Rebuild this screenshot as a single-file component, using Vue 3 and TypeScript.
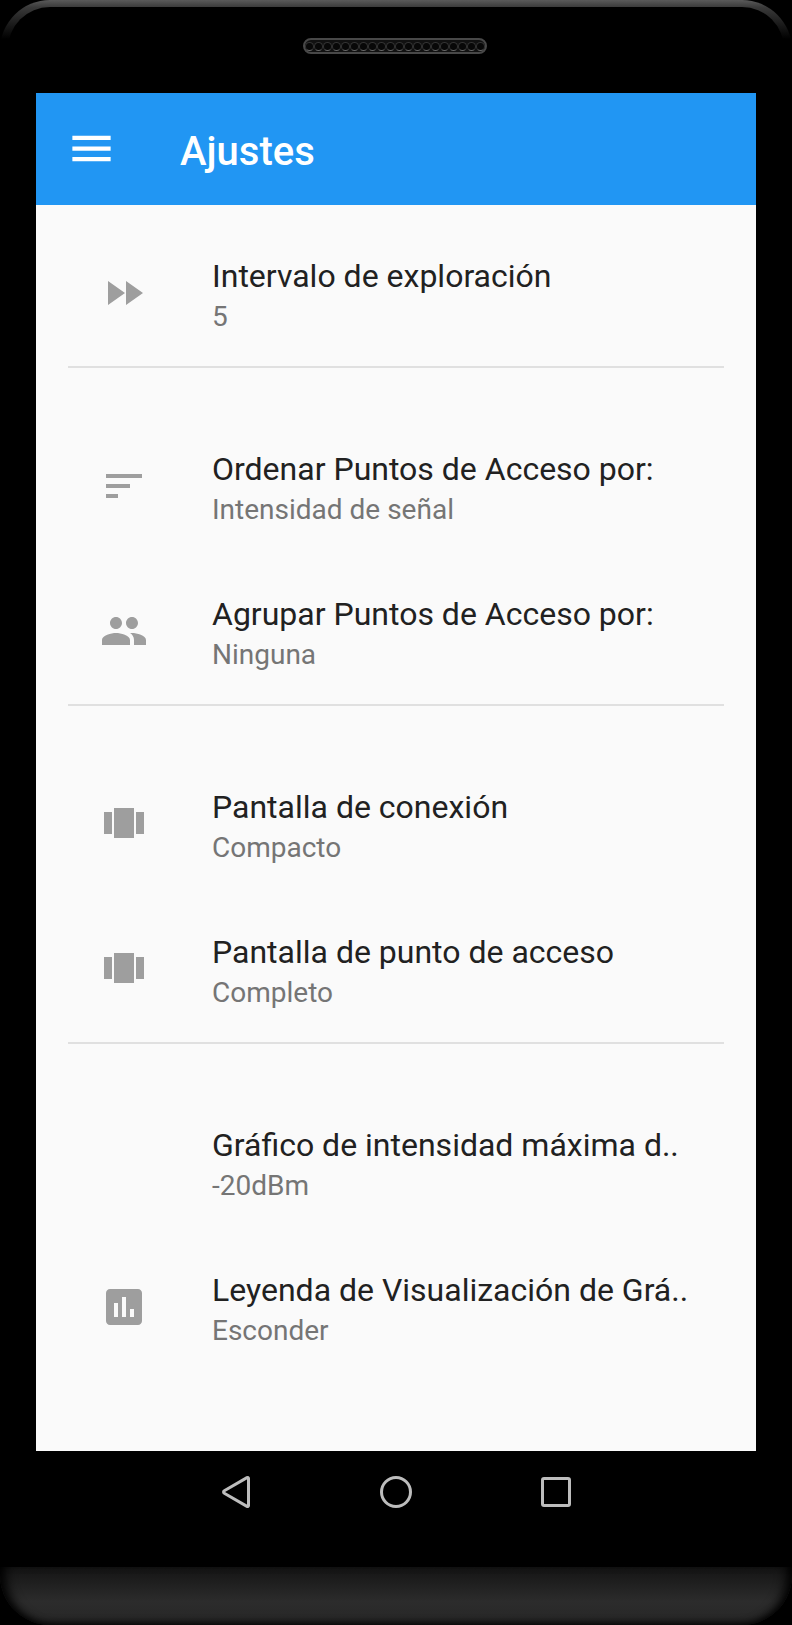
<script setup lang="ts">
interface Row {
  title: string;
  value: string;
  icon?: string;
}

const forward = 'M4 18l8.5-6L4 6v12zm9-12v12l8.5-6L13 6z';
const sort = 'M3 18h6v-2H3v2zM3 6v2h18V6H3zm0 7h12v-2H3v2z';
const group =
  'M16 11c1.66 0 2.99-1.34 2.99-3S17.66 5 16 5c-1.66 0-3 1.34-3 3s1.34 3 3 3zm-8 0c1.66 0 2.99-1.34 2.99-3S9.66 5 8 5C6.34 5 5 6.34 5 8s1.34 3 3 3zm0 2c-2.33 0-7 1.17-7 3.5V19h14v-2.5c0-2.33-4.67-3.5-7-3.5zm8 0c-.29 0-.62.02-.97.05 1.16.84 1.97 1.97 1.97 3.45V19h6v-2.5c0-2.33-4.67-3.5-7-3.5z';
const carousel = 'M7 19h10V4H7v15zm-5-2h4V6H2v11zM18 6v11h4V6h-4z';
const chart =
  'M19 3H5c-1.1 0-2 .9-2 2v14c0 1.1.9 2 2 2h14c1.1 0 2-.9 2-2V5c0-1.1-.9-2-2-2zM9 17H7v-7h2v7zm4 0h-2V7h2v10zm4 0h-2v-4h2v4z';

const sections: Row[][] = [
  [{ title: 'Intervalo de exploración', value: '5', icon: forward }],
  [
    { title: 'Ordenar Puntos de Acceso por:', value: 'Intensidad de señal', icon: sort },
    { title: 'Agrupar Puntos de Acceso por:', value: 'Ninguna', icon: group },
  ],
  [
    { title: 'Pantalla de conexión', value: 'Compacto', icon: carousel },
    { title: 'Pantalla de punto de acceso', value: 'Completo', icon: carousel },
  ],
  [
    { title: 'Gráfico de intensidad máxima d..', value: '-20dBm' },
    { title: 'Leyenda de Visualización de Grá..', value: 'Esconder', icon: chart },
  ],
];
</script>

<template>
  <div class="phone">
    <div class="bezel-top">
      <div class="bezel-arc"><div class="bezel-inner"></div></div>
      <div class="speaker">
        <span v-for="n in 20" :key="n" class="hole"></span>
      </div>
    </div>

    <div class="screen">
      <header class="toolbar">
        <svg class="menu" viewBox="0 0 24 24" width="51" height="51">
          <path fill="#fff" d="M3 18h18v-2H3v2zm0-5h18v-2H3v2zm0-7v2h18V6H3z" />
        </svg>
        <h1>Ajustes</h1>
      </header>

      <main class="content">
        <section v-for="(rows, i) in sections" :key="i" class="group" :class="{ last: i === sections.length - 1 }">
          <div v-for="row in rows" :key="row.title" class="row">
            <div class="icon">
              <svg v-if="row.icon" viewBox="0 0 24 24" width="48" height="48">
                <path fill="#9e9e9e" :d="row.icon" />
              </svg>
            </div>
            <div class="text">
              <div class="title">{{ row.title }}</div>
              <div class="value">{{ row.value }}</div>
            </div>
          </div>
        </section>
      </main>
    </div>

    <nav class="nav">
      <svg viewBox="0 0 48 48" width="48" height="48">
        <path d="M36.5 10.5V37.5a1 1 0 0 1-1.5 .9L12.3 25.3a1.5 1.5 0 0 1 0-2.6L35 9.6a1 1 0 0 1 1.5 .9z" class="nav-line" />
      </svg>
      <svg viewBox="0 0 48 48" width="48" height="48">
        <circle cx="24" cy="24" r="14.5" class="nav-line" />
      </svg>
      <svg viewBox="0 0 48 48" width="48" height="48">
        <rect x="10.5" y="10.5" width="27" height="27" rx="1.5" class="nav-line" />
      </svg>
    </nav>

    <div class="bezel-bottom"></div>
  </div>
</template>

<style>
html,
body {
  background: #000;
}
</style>

<style scoped>
.phone {
  width: 792px;
  height: 1625px;
  background: #000;
  display: flex;
  flex-direction: column;
  font-family: Roboto, sans-serif;
  overflow: hidden;
}

/* top of the device */
.bezel-top {
  position: relative;
  height: 93px;
  flex: none;
}

.bezel-arc {
  position: absolute;
  top: 0;
  left: 0;
  right: 0;
  height: 60px;
  border-radius: 50px 50px 0 0;
  background: linear-gradient(#5a5a5a, #3a3a3a 12%, #000 65%);
}

.bezel-inner {
  position: absolute;
  top: 7px;
  left: 8px;
  right: 8px;
  bottom: 0;
  border-radius: 42px 42px 0 0;
  background: #000;
}

.speaker {
  position: absolute;
  top: 38px;
  left: 303px;
  width: 184px;
  height: 16px;
  box-sizing: border-box;
  border: 2px solid #484848;
  border-radius: 8px;
  display: flex;
  align-items: center;
  justify-content: center;
  gap: 0.2px;
  background: #111;
}

.hole {
  width: 9px;
  height: 9px;
  box-sizing: border-box;
  border-radius: 50%;
  border: 1px solid #333;
  border-bottom-color: #666;
  background: #080808;
}

/* app */
.screen {
  height: 1358px;
  flex: none;
  margin: 0 36px;
  background: #fafafa;
  display: flex;
  flex-direction: column;
}

.toolbar {
  height: 112px;
  flex: none;
  background: #2196f3;
  display: flex;
  align-items: center;
}

.menu {
  margin: -2px 0 0 30px;
}

.toolbar h1 {
  margin: 4px 0 0 63px;
  font-size: 40px;
  font-weight: 500;
  color: #fff;
}

.content {
  padding: 15px 32px 0;
}

.group {
  border-bottom: 2px solid #e0e0e0;
  padding-bottom: 1px;
  margin-bottom: 45px;
}

.group.last {
  border-bottom: none;
}

.row {
  height: 145px;
  display: flex;
  align-items: center;
}

.icon {
  width: 48px;
  height: 48px;
  margin-left: 32px;
  flex: none;
}

.text {
  margin: 7px 0 0 64px;
  min-width: 0;
}

.title {
  font-size: 32px;
  line-height: 40px;
  color: #212121;
  white-space: nowrap;
}

.value {
  font-size: 28px;
  line-height: 41px;
  color: #757575;
}

/* android buttons */
.nav {
  height: 116px;
  flex: none;
  display: flex;
  justify-content: center;
  align-items: flex-start;
  gap: 112px;
  padding-top: 17px;
  box-sizing: border-box;
}

.nav-line {
  fill: none;
  stroke: #bdbdbd;
  stroke-width: 3;
}

.bezel-bottom {
  height: 58px;
  flex: none;
  background: linear-gradient(#141414, #2c2c2c 60%, #262626);
  border-radius: 0 0 50px 50px;
  box-shadow: inset 0 -6px 8px -5px #000, inset 12px 0 12px -7px #000, inset -12px 0 12px -7px #000;
}
</style>
